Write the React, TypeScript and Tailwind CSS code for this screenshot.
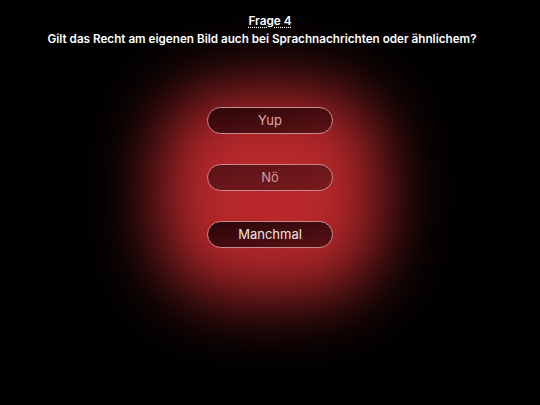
export default function App() {
  const font = { fontFamily: '"Inter", "Noto Sans", sans-serif' };
  return (
    <div className="relative w-[540px] h-[405px] overflow-hidden bg-black text-white" style={font}>
      <div className="absolute left-[158px] top-[88px] w-[224px] h-[210px] rounded-[70px] bg-[#b8282b] blur-[34px]" />
      <div className="relative flex flex-col items-center pt-[13px]">
        <abbr className="text-[11.8px] font-semibold leading-[16px]" style={{ textDecorationLine: 'underline', textDecorationStyle: 'dotted', textUnderlineOffset: '2px' }}>
          Frage 4
        </abbr>
        <h1 className="text-[11.7px] font-semibold leading-[18px] mt-[1px] pr-[16px]">
          Gilt das Recht am eigenen Bild auch bei Sprachnachrichten oder ähnlichem?
        </h1>
        <div className="flex flex-col items-center gap-[30px] mt-[59px]">
          <button className="w-[126px] h-[27px] rounded-full border border-[#c98a8e] bg-gradient-to-br from-[#2e0709] to-[#5c1216] text-[13px] text-[#dfa9ad]">
            Yup
          </button>
          <button className="w-[126px] h-[27px] rounded-full border border-[#c98a8e] bg-gradient-to-br from-[#5a1317] to-[#7a1a1e] text-[13px] text-[#d99ca1]">
            Nö
          </button>
          <button className="w-[126px] h-[27px] rounded-full border border-[#c98a8e] bg-gradient-to-br from-[#2a0608] to-[#5a1115] text-[13px] text-[#f3e4e4]">
            Manchmal
          </button>
        </div>
      </div>
    </div>
  );
}
